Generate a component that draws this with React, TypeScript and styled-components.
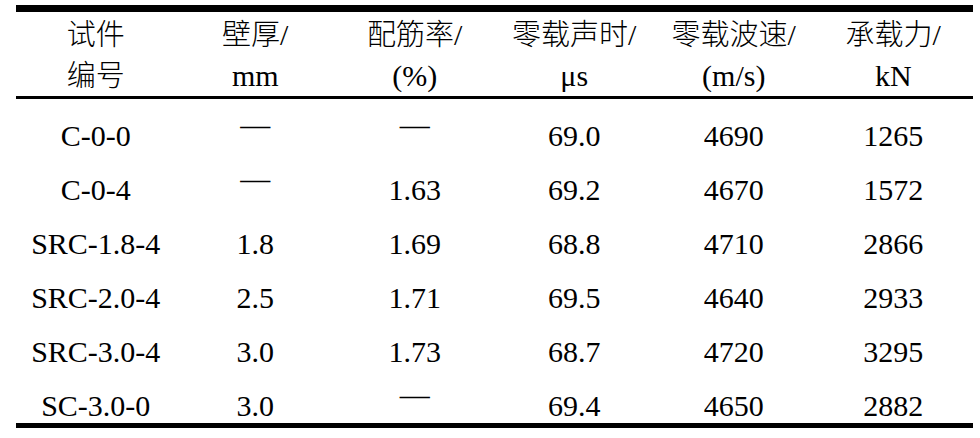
import React from "react";
import styled, { createGlobalStyle } from "styled-components";

type Row = [string, string, string, string, string, string];
type Header = { name: string; slash: boolean; unit: string; cjkUnit?: boolean };

const DASH = "—";

const headers: Header[] = [
  { name: "试件", slash: false, unit: "编号", cjkUnit: true },
  { name: "壁厚", slash: true, unit: "mm" },
  { name: "配筋率", slash: true, unit: "(%)" },
  { name: "零载声时", slash: true, unit: "μs" },
  { name: "零载波速", slash: true, unit: "(m/s)" },
  { name: "承载力", slash: true, unit: "kN" },
];

const rows: Row[] = [
  ["C-0-0", DASH, DASH, "69.0", "4690", "1265"],
  ["C-0-4", DASH, "1.63", "69.2", "4670", "1572"],
  ["SRC-1.8-4", "1.8", "1.69", "68.8", "4710", "2866"],
  ["SRC-2.0-4", "2.5", "1.71", "69.5", "4640", "2933"],
  ["SRC-3.0-4", "3.0", "1.73", "68.7", "4720", "3295"],
  ["SC-3.0-0", "3.0", DASH, "69.4", "4650", "2882"],
];

const SERIF = `"Liberation Serif", "Noto Sans CJK SC", serif`;

const App: React.FC = () => {
  return (
    <>
      <GlobalStyle />
      <Page>
        <Table>
          <colgroup>
            {headers.map((_, i) => (
              <col key={i} />
            ))}
          </colgroup>
          <thead>
            <tr>
              {headers.map((h) => (
                <HeadCell key={h.name}>
                  <Cjk>{h.name}</Cjk>
                  {h.slash && "/"}
                  <br />
                  {h.cjkUnit ? <Cjk>{h.unit}</Cjk> : h.unit}
                </HeadCell>
              ))}
            </tr>
          </thead>
          <tbody>
            {rows.map((row, r) => (
              <tr key={r}>
                {row.map((value, c) =>
                  value === DASH ? (
                    <Cell key={c}>
                      <Dash>{DASH}</Dash>
                    </Cell>
                  ) : (
                    <Cell key={c}>{value}</Cell>
                  )
                )}
              </tr>
            ))}
          </tbody>
        </Table>
      </Page>
    </>
  );
};

const GlobalStyle = createGlobalStyle`
  html, body {
    margin: 0;
    padding: 0;
    background: #ffffff;
  }
  body {
    font-family: ${SERIF};
    color: #000000;
  }
`;

const Page = styled.div`
  width: 980px;
  height: 438px;
  padding: 5px 0 0 16px;
  box-sizing: border-box;
  overflow: hidden;
`;

const Table = styled.table`
  width: 957px;
  table-layout: fixed;
  border-collapse: collapse;
  border-top: 7px solid #000;
  border-bottom: 5px solid #000;
  font-family: ${SERIF};
  font-size: 30px;
  color: #000;

  col {
    width: 159.5px;
  }
`;

const HeadCell = styled.th`
  font-family: ${SERIF};
  font-weight: normal;
  text-align: center;
  line-height: 41px;
  padding: 2px 0 0;
  border-bottom: 3px solid #000;
  white-space: nowrap;
`;

const Cjk = styled.span`
  font-family: "Noto Sans CJK SC", sans-serif;
  font-weight: 300;
  font-size: 29px;
  line-height: 0;
`;

const Cell = styled.td`
  font-family: ${SERIF};
  text-align: center;
  line-height: 34px;
  padding: 20px 0 0;
  white-space: nowrap;
`;

const Dash = styled.span`
  display: inline-block;
  transform: translateY(-11px);
`;

export default App;
